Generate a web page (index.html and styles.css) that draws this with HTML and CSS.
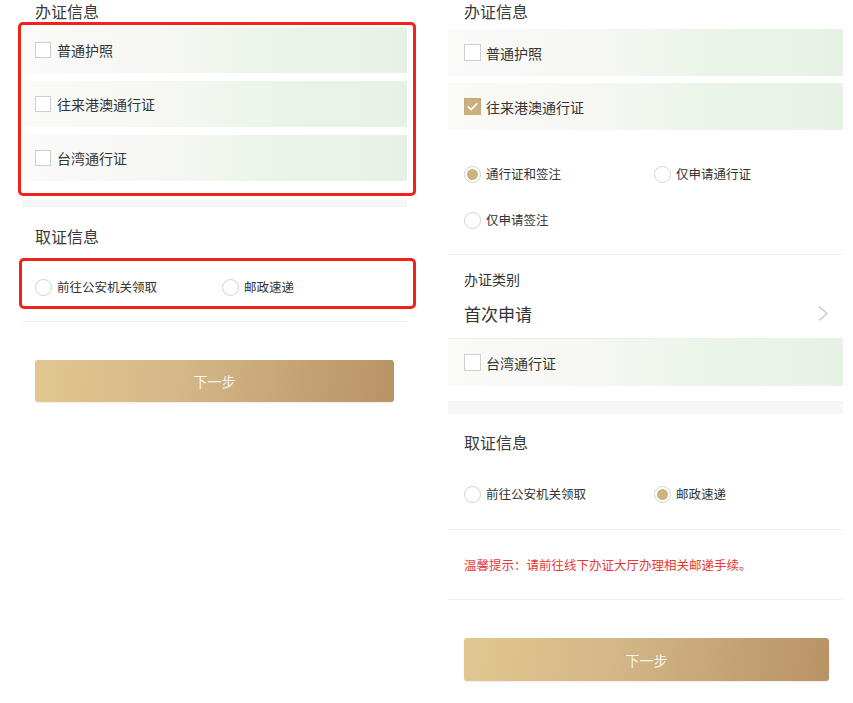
FILE: index.html
```html
<!DOCTYPE html>
<html lang="zh-CN">
<head>
<meta charset="utf-8">
<title>办证信息</title>
<link rel="stylesheet" href="styles.css">
</head>
<body>
<div class="page">
  <section class="col col-left">
    <div class="title title-top">办证信息</div>
    <div class="rows rows-left marked marked-a">
      <div class="row"><span class="check"></span><span class="label">普通护照</span></div>
      <div class="row"><span class="check"></span><span class="label">往来港澳通行证</span></div>
      <div class="row"><span class="check"></span><span class="label">台湾通行证</span></div>
    </div>
    <div class="strip strip-left"></div>
    <div class="title title-second">取证信息</div>
    <div class="options options-left">
      <div class="radio-line marked marked-b">
        <div class="radio-item"><span class="radio"></span><span class="rlabel">前往公安机关领取</span></div>
        <div class="radio-item"><span class="radio"></span><span class="rlabel">邮政速递</span></div>
      </div>
    </div>
    <button class="btn btn-left" type="button">下一步</button>
  </section>

  <section class="col col-right">
    <div class="title title-top">办证信息</div>
    <div class="rows rows-right">
      <div class="row"><span class="check"></span><span class="label">普通护照</span></div>
      <div class="row"><span class="check checked"><svg viewBox="0 0 17 17" width="17" height="17"><path d="M4.3 8.8 L7.3 11.6 L12.8 5.8" fill="none" stroke="#fff" stroke-width="1.6" stroke-linecap="round" stroke-linejoin="round"/></svg></span><span class="label">往来港澳通行证</span></div>
    </div>
    <div class="options options-visa">
      <div class="radio-line">
        <div class="radio-item"><span class="radio on"></span><span class="rlabel">通行证和签注</span></div>
        <div class="radio-item"><span class="radio"></span><span class="rlabel">仅申请通行证</span></div>
      </div>
      <div class="radio-line">
        <div class="radio-item"><span class="radio"></span><span class="rlabel">仅申请签注</span></div>
      </div>
    </div>
    <div class="category">
      <div class="cat-label">办证类别</div>
      <div class="cat-value">
        <span>首次申请</span>
        <svg class="chevron" viewBox="0 0 12 17" width="12" height="17"><path d="M2 1.5 L10 8.5 L2 15.5" fill="none" stroke="#c4c4c4" stroke-width="1.3"/></svg>
      </div>
    </div>
    <div class="rows rows-right rows-tw">
      <div class="row"><span class="check"></span><span class="label">台湾通行证</span></div>
    </div>
    <div class="band"></div>
    <div class="title title-pick">取证信息</div>
    <div class="options options-right">
      <div class="radio-line">
        <div class="radio-item"><span class="radio"></span><span class="rlabel">前往公安机关领取</span></div>
        <div class="radio-item"><span class="radio on"></span><span class="rlabel">邮政速递</span></div>
      </div>
    </div>
    <div class="tip">温馨提示：请前往线下办证大厅办理相关邮递手续。</div>
    <button class="btn btn-right" type="button">下一步</button>
  </section>
</div>
</body>
</html>
```

FILE: styles.css
```css
* { box-sizing: border-box; }
html, body { margin: 0; padding: 0; background: #fff; }
body {
  font-family: "Noto Sans CJK SC", "Noto Sans", sans-serif;
  color: #333;
  width: 853px;
  height: 703px;
  overflow: hidden;
}
.page {
  display: flex;
  align-items: flex-start;
}
.col { position: relative; }
.col-left { width: 385px; margin-left: 22px; }
.col-right { width: 395px; margin-left: 41px; }

.title {
  font-size: 16px;
  line-height: 20px;
  height: 20px;
  color: #3a3a3a;
}
.title-top {
  line-height: 24px;
  margin-top: -1px;
  height: 21px;
}
.col-left .title { padding-left: 13px; }
.col-right .title { padding-left: 16px; }

.rows { display: flex; flex-direction: column; }
.rows-left { margin-top: 7px; gap: 8px; }
.rows-right { margin-top: 9px; gap: 7px; }
.row {
  display: flex;
  align-items: center;
  height: 46px;
  background: linear-gradient(90deg, #fafaf9 0%, #f6f7f3 38%, #eaf5e8 66%, #e6f3e4 100%);
}
.rows-left .row { padding-left: 13px; }
.rows-right .row { height: 47px; padding-left: 16px; }

.check {
  width: 16px;
  height: 16px;
  border: 1px solid #cfcfcf;
  background: #fff;
  flex: none;
  display: flex;
}
.rows-right .check { width: 17px; height: 17px; }
.check.checked {
  background: #c9b07c;
  border-color: #c4ab78;
}
.check.checked svg { margin: -1px; }
.label {
  font-size: 14px;
  margin-left: 6px;
  color: #333;
  line-height: 20px;
}
.rows-right .label { margin-left: 5px; }

.strip-left {
  margin-top: 19px;
  height: 7px;
  background: #f5f6f5;
}
.title-second { margin-top: 19px; }

.options-left {
  padding: 29px 13px 22px;
  border-bottom: 1px solid #f1f1f1;
}
.radio-line {
  display: flex;
  align-items: center;
  height: 24px;
}
.radio-item {
  display: flex;
  align-items: center;
}
.options-left .radio-item:first-child { width: 187px; }
.radio {
  width: 17px;
  height: 17px;
  border: 1px solid #d2d2d2;
  border-radius: 50%;
  background: #fff;
  flex: none;
  display: flex;
  align-items: center;
  justify-content: center;
}
.radio.on::after {
  content: "";
  width: 11px;
  height: 11px;
  border-radius: 50%;
  background: #ccb37f;
}
.rlabel {
  font-size: 12.5px;
  margin-left: 5px;
  line-height: 20px;
  color: #333;
}

/* annotation frames over content */
.marked { position: relative; }
.marked::after {
  content: "";
  position: absolute;
  border: 3px solid #f1221b;
  border-radius: 5px;
  pointer-events: none;
}
.marked-a::after { left: -4px; right: -9px; top: -5px; bottom: -15px; }
.marked-b::after { left: -16px; right: -22px; top: -17px; bottom: -10px; }

.btn {
  display: flex;
  align-items: center;
  justify-content: center;
  border: none;
  border-radius: 3px;
  background: linear-gradient(100deg, #e1c78f 0%, #d4b888 40%, #c4a173 75%, #b89366 100%);
  color: rgba(255, 255, 255, 0.9);
  font-family: inherit;
  font-size: 14px;
  padding: 0;
  box-shadow: 0 1px 2px rgba(0, 0, 0, 0.08);
}
.btn-left {
  margin: 38px 13px 0;
  width: 359px;
  height: 42px;
}

/* right column */
.options-visa {
  padding: 21px 16px 11px;
  border-bottom: 1px solid #f1f1f1;
}
.options-visa .radio-line { height: 46px; }
.options-visa .radio-item:first-child,
.options-right .radio-item:first-child { width: 190px; }

.category {
  padding: 14px 14px 0 16px;
  border-bottom: 1px solid #efefef;
}
.cat-label {
  font-size: 14px;
  line-height: 20px;
  color: #333;
}
.cat-value {
  display: flex;
  align-items: center;
  justify-content: space-between;
  margin-top: 12px;
  height: 25px;
  margin-bottom: 12px;
  font-size: 17px;
  color: #333;
}
.chevron { display: block; }
.rows-tw { margin-top: 0; }

.band {
  margin-top: 15px;
  height: 13px;
  background: #f6f6f6;
}
.title-pick { margin-top: 18px; }
.options-right {
  padding: 19px 16px 12px;
  border-bottom: 1px solid #f1f1f1;
}
.options-right .radio-line { height: 46px; }

.tip {
  padding: 25px 16px 24px;
  font-size: 12.5px;
  line-height: 20px;
  color: #e53935;
  border-bottom: 1px solid #f1f1f1;
}
.btn-right {
  margin: 38px 14px 0 16px;
  width: 365px;
  height: 43px;
}
```
